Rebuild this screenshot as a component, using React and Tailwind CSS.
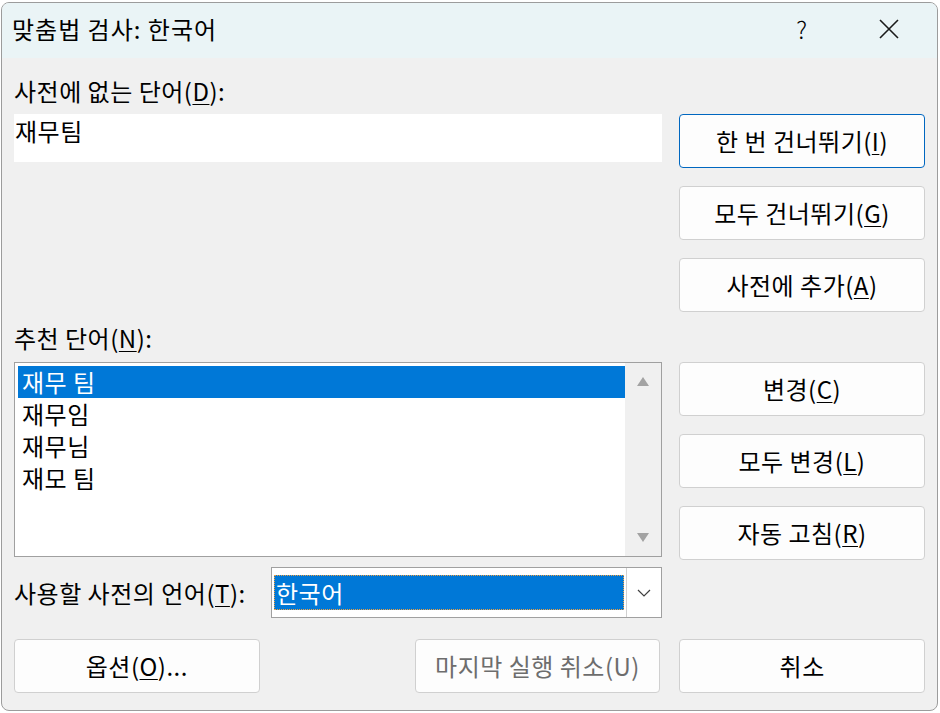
import React from "react";

const font = { fontFamily: '"Noto Sans CJK KR", "Noto Sans", sans-serif' };

function U({ children }) {
  return <span className="underline underline-offset-[3px] decoration-1">{children}</span>;
}

function Btn({ children, primary, disabled, className = "" }) {
  return (
    <div
      className={`flex h-[54px] w-[246px] items-center justify-center rounded-[4px] border bg-[#fdfdfd] text-[24px] tracking-[0.5px] ${
        primary ? "border-[#0067c0]" : "border-[#d0d0d0]"
      } ${disabled ? "text-[#6d6d6d]" : "text-black"} ${className}`}
    >
      {children}
    </div>
  );
}

export default function App() {
  const suggestions = ["재무 팀", "재무임", "재무님", "재모 팀"];
  return (
    <div className="h-[713px] w-[940px] bg-white pl-[1px] pr-[2px] pt-[2px] pb-[2px]" style={font}>
      <div className="flex h-full flex-col overflow-hidden rounded-[8px] border border-[#9c9c9c] bg-[#f0f0f0]">
        <div className="flex h-[55px] shrink-0 items-start bg-[#eaf4f6] pl-[10px] pt-[9px]">
          <span className="text-[24px] leading-[34px] tracking-[1px] text-black">맞춤법 검사: 한국어</span>
          <span className="ml-auto mr-[72px] text-[24px] font-light leading-[34px] text-black">?</span>
          <svg width="20" height="20" viewBox="0 0 20 20" className="mr-[38px] mt-[7px]">
            <path d="M1 1 L19 19 M19 1 L1 19" stroke="#1a1a1a" strokeWidth="1.6" />
          </svg>
        </div>

        <div className="flex flex-col px-[12px] pt-[18px]">
          <div className="h-[30px] text-[24px] leading-[30px] tracking-[0.5px] text-black">
            사전에 없는 단어(<U>D</U>):
          </div>

          <div className="mt-[8px] flex gap-[17px]">
            <div className="flex w-[649px] flex-col">
              <div className="h-[48px] bg-white px-[1px] text-[24px] leading-[34px] tracking-[0.5px] text-black">재무팀</div>
              <div className="mt-[161px] h-[30px] text-[24px] leading-[30px] tracking-[0.5px] text-black">
                추천 단어(<U>N</U>):
              </div>
              <div className="mt-[9px] flex h-[195px] border border-[#a0a0a0] bg-white p-[3px]">
                <div className="flex flex-1 flex-col">
                  {suggestions.map((s, i) => (
                    <div
                      key={s}
                      className={`h-[32px] px-[4px] text-[24px] leading-[31px] tracking-[0.5px] ${
                        i === 0 ? "bg-[#0078d7] text-white" : "text-black"
                      }`}
                    >
                      {s}
                    </div>
                  ))}
                </div>
                <div className="-my-[3px] -mr-[3px] flex w-[36px] flex-col items-center justify-between bg-[#f0f0f0] py-[14px]">
                  <svg width="12" height="9" viewBox="0 0 12 9">
                    <path d="M6 0 L12 9 L0 9 Z" fill="#a3a3a3" />
                  </svg>
                  <svg width="12" height="9" viewBox="0 0 12 9">
                    <path d="M0 0 L12 0 L6 9 Z" fill="#a3a3a3" />
                  </svg>
                </div>
              </div>
              <div className="mt-[10px] flex h-[51px] items-center">
                <div className="w-[257px] text-[24px] tracking-[0.5px] text-black">
                  사용할 사전의 언어(<U>T</U>):
                </div>
                <div className="flex h-[51px] flex-1 items-center border border-[#a0a0a0] bg-white pl-[2px]">
                  <div className="flex h-[35px] flex-1 items-center border border-dotted border-[#f0a040] bg-[#0078d7] px-[1px] text-[24px] tracking-[0.5px] text-white">
                    한국어
                  </div>
                  <div className="ml-[2px] flex h-[49px] w-[35px] items-center justify-center border-l border-[#d0d0d0]">
                    <svg width="14" height="8" viewBox="0 0 14 8">
                      <path d="M1 1 L7 7 L13 1" fill="none" stroke="#404040" strokeWidth="1.2" />
                    </svg>
                  </div>
                </div>
              </div>
            </div>

            <div className="flex flex-col">
              <Btn primary>한 번 건너뛰기(<U>I</U>)</Btn>
              <Btn className="mt-[18px]">모두 건너뛰기(<U>G</U>)</Btn>
              <Btn className="mt-[18px]">사전에 추가(<U>A</U>)</Btn>
              <Btn className="mt-[50px]">변경(<U>C</U>)</Btn>
              <Btn className="mt-[18px]">모두 변경(<U>L</U>)</Btn>
              <Btn className="mt-[18px]">자동 고침(<U>R</U>)</Btn>
            </div>
          </div>

          <div className="mt-[21px] flex">
            <Btn>옵션(<U>O</U>)...</Btn>
            <Btn disabled className="ml-[155px]">마지막 실행 취소(U)</Btn>
            <Btn className="ml-[19px]">취소</Btn>
          </div>
        </div>
      </div>
    </div>
  );
}
